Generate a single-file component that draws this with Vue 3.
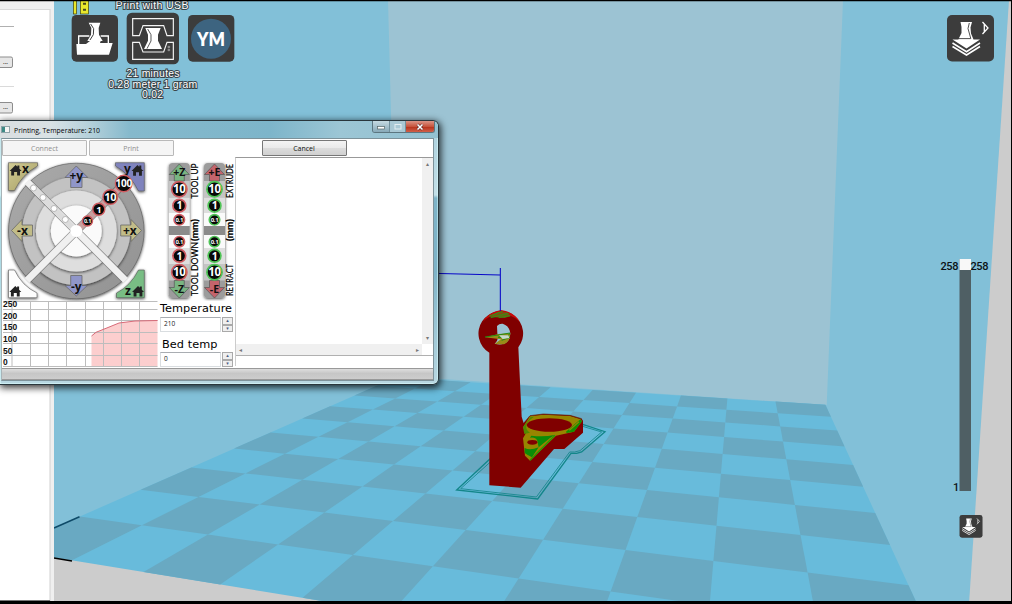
<script setup>
// Floor lattice: [column, row, x, y] anchors for the perspective fit
const anchors = [
  [0, 0, 826.7, 405], [3, 0, 680, 396], [6, 0, 550, 387], [0, 4, 852.3, 465],
  [3, 4, 661.7, 449], [0, 8, 908.3, 584.3], [3, 9, 611.7, 591], [6, 10, 304, 597.7],
  [9, 10, 71.7, 560.7], [10, 9, 80, 516.7], [10, 5, 269.3, 432.7], [10, 2, 356.7, 395],
  [7, 5, 419.3, 446], [6, 8, 393.3, 521.3], [8, 8, 259, 504.7], [2, 7, 716.7, 525.7],
]

function solve(m, v) {
  const n = v.length
  const a = m.map((r, i) => [...r, v[i]])
  for (let c = 0; c < n; c++) {
    let p = c
    for (let r = c + 1; r < n; r++) if (Math.abs(a[r][c]) > Math.abs(a[p][c])) p = r
    ;[a[c], a[p]] = [a[p], a[c]]
    for (let r = 0; r < n; r++) {
      if (r === c) continue
      const f = a[r][c] / a[c][c]
      for (let k = c; k <= n; k++) a[r][k] -= f * a[c][k]
    }
  }
  return a.map((r, i) => r[n] / r[i])
}

function fit() {
  const N = Array.from({ length: 8 }, () => Array(8).fill(0))
  const v = Array(8).fill(0)
  for (const [u0, w0, x0, y0] of anchors) {
    const u = u0 / 10, w = w0 / 10, x = x0 / 1000, y = y0 / 1000
    const rows = [[[u, w, 1, 0, 0, 0, -u * x, -w * x], x], [[0, 0, 0, u, w, 1, -u * y, -w * y], y]]
    for (const [r, t] of rows) {
      for (let i = 0; i < 8; i++) {
        v[i] += r[i] * t
        for (let j = 0; j < 8; j++) N[i][j] += r[i] * r[j]
      }
    }
  }
  return solve(N, v)
}
const h = fit()
function at(a, b) {
  const u = a / 10, w = b / 10
  const d = h[6] * u + h[7] * w + 1
  return [(h[0] * u + h[1] * w + h[2]) / d * 1000, (h[3] * u + h[4] * w + h[5]) / d * 1000]
}
const quad = (a, b, c, d) => [at(a, b), at(c, b), at(c, d), at(a, d)].map(p => p.map(n => n.toFixed(1)).join(',')).join(' ')
const floor = quad(0, 0, 10, 10)
const tiles = []
for (let i = 0; i < 10; i++) for (let j = 0; j < 10; j++) if ((i + j) % 2 === 0) tiles.push(quad(i, j, i + 1, j + 1))

const columns = [
  { x: 179.3, up: '+Z', down: '-Z', fill: '#79b582', ring: '#cf5c62' },
  { x: 214.5, up: '+E', down: '-E', fill: '#c4646c', ring: '#4fc456' },
]
const stops = [
  { y: 189.3, r: 7.6, t: '10', s: 11.5 }, { y: 205.7, r: 6.4, t: '1', s: 10.5 }, { y: 219.8, r: 5.2, t: '0.1', s: 6 },
  { y: 241.7, r: 5.2, t: '0.1', s: 6 }, { y: 255.8, r: 6.4, t: '1', s: 10.5 }, { y: 272.2, r: 7.6, t: '10', s: 11.5 },
]
const sideLabels = [
  { x: 197.5, y: 198.5, t: 'TOOL UP', l: 35 }, { x: 197.5, y: 296, t: 'TOOL DOWN', l: 54 },
  { x: 232.5, y: 198, t: 'EXTRUDE', l: 34 }, { x: 232.5, y: 296, t: 'RETRACT', l: 32 },
]
const steps = [
  { x: 87.5, y: 221, r: 5, t: '0.1', s: 5.5 }, { x: 98.8, y: 209.3, r: 6, t: '1', s: 9.5 },
  { x: 110.3, y: 197, r: 7.3, t: '10', s: 11 }, { x: 123.7, y: 183.5, r: 8.3, t: '100', s: 10 },
]
const scale = [['250', 307.4], ['200', 318.5], ['150', 330.3], ['100', 341.8], ['50', 353.5], ['0', 365]]
const gx = [12, 30.5, 48.5, 66.5, 85.5, 103.5, 121.5, 139.5]
const gy = [301.5, 309.5, 320.5, 332.5, 343.5, 355.5, 366.5]
const home = 'M-6 .5L0-5.5L1.8-3.7V-5H3.8V-1.7L6 .5H4.4V5.2H1.5V1.6H-1.5V5.2H-4.4V.5Z'
</script>

<template>
  <div class="screen">
    <svg class="scene" width="1012" height="604" viewBox="0 0 1012 604">
      <rect width="1012" height="604" fill="#cccccc" />
      <polygon points="54,0 1009,0 969,604 915,604 400,604 54,540" fill="#82c0d8" />
      <polygon points="54,558 72,561 305,598 330,604 54,604" fill="#cccccc" />
      <polygon points="388,0 843,0 826.7,405 398,376" fill="#9cc3d3" />
      <polygon :points="floor" fill="#68bbdb" />
      <polygon v-for="t in tiles" :key="t" :points="t" fill="#69a9c2" />
      <path d="M54 528L79.5 516.7" stroke="#0e4a68" stroke-width="1.5" />
      <path d="M54 558L72 561" stroke="#000" stroke-width="1.7" />
      <rect width="50" height="604" fill="#fff" />
      <rect x="50" width="4" height="604" fill="#efefef" />
      <rect x="49.5" y="9" width="1" height="592" fill="#d2d2d2" />
      <rect y="1" width="54" height="8" fill="#f0f0f0" />
      <path d="M0 9.5H50M0 86.5H14" stroke="#dadada" />
      <path d="M0 26.5H14" stroke="#b0b0b0" />
      <path d="M0 600.5H50" stroke="#777" />
      <g v-for="y in [57, 102.5]" :key="y">
        <rect x="-4" :y="y" width="16.5" height="10.5" rx="1.5" fill="#e6e6e6" stroke="#8d8d8d" />
        <text x="3" :y="y + 6.8" class="dots">...</text>
      </g>
      <g transform="translate(430 250) scale(.33333)">
        <path d="M190 617L80 720L323 747L423 610H440L455 606L525 545L458 523" fill="none" stroke="#13868a" stroke-width="4" />
        <path d="M190 628L92 716L319 741L419 606H434L450 602L515 546L458 529" fill="none" stroke="#13868a" stroke-width="2.5" />
        <path fill-rule="evenodd" d="M178 308A67 67 0 1 1 265 292L275 500L281 520L300 497L340 492L420 496L455 506L459 512V548L403 597H372L272 713L178 706ZM201 228Q208 220 218 221Q238 227 241 250Q241 275 222 281Q210 286 194 281Q207 272 202 250Z" fill="#800000" />
        <path d="M194 282Q204 274 213 268L165 262L205 252L241 250Q240 275 222 283Z" fill="#998b18" />
        <path d="M165 261L205 255L240 249L236 256L204 262L240 262L215 271" fill="none" stroke="#228b12" stroke-width="3" />
        <path d="M207 256H235L238 264L218 267Z" fill="#c8d8cb" />
        <path d="M158 216Q175 186 213 180Q252 185 270 216Q245 193 213 188Q180 193 158 216Z" fill="#c80808" />
        <path d="M178 200L205 185L230 187L243 198L224 204Z" fill="#7c5014" />
        <path d="M178 198L218 184M182 203L236 190M206 203L240 197" stroke="#2a9a10" stroke-width="3" />
        <path d="M279 532L300 499L340 494L420 498L452 508L456 514L432 545L378 557L300 632L285 617L279 565L288 549Z" fill="#978500" />
        <path d="M283 552L279 532L302 501L312 500Q290 515 289 527Q287 540 300 548Z" fill="#4f8a00" />
        <path d="M304 557Q340 562 374 555L360 564L326 592L322 572Q316 560 300 563Z" fill="#0b8c07" />
        <path d="M284 594Q300 602 326 592L306 622Q294 616 284 609Z" fill="#0b8c07" />
        <path d="M375 556L300 631" fill="none" stroke="#2a9600" stroke-width="4" />
        <path d="M408 545L451 508L456 514L432 545L410 549Z" fill="#129000" />
        <path d="M418 541L447 515" stroke="#8a8800" stroke-width="4" />
        <ellipse cx="358" cy="525" rx="68" ry="20" fill="#800000" />
        <ellipse cx="307" cy="577" rx="15" ry="7" fill="#800000" />
        <path d="M281 520L300 497L340 492L420 496L455 506" fill="none" stroke="#612400" stroke-width="2" />
        <path d="M0 70L211 75M211 54V183" fill="none" stroke="#0808c8" stroke-width="3.2" />
      </g>
      <!-- toolbar -->
      <g transform="scale(.33333)">
        <g fill="#e8e82c" stroke="#38380c" stroke-width="2">
          <rect x="220" y="0" width="10" height="42" /><rect x="241" y="0" width="25" height="42" />
        </g>
        <path d="M249 8H258V14H249ZM249 26H258V32H249Z" fill="#48481c" />
        <g fill="#3c3c3c">
          <rect x="215" y="45" width="139" height="140" rx="14" />
          <rect x="380" y="38" width="157" height="155" rx="16" />
          <rect x="564" y="45" width="139" height="140" rx="14" />
        </g>
        <path d="M236 132V108H268M302 108H325V130" fill="none" stroke="#fff" stroke-width="4" />
        <path d="M229 132H258L270 123H262L273 104L274 84L266 68H301L296 84L297 104L308 123H302L300 129H338L327 164H231Z" fill="#fff" />
        <path d="M272 72L281 86L280 104L270 120" fill="none" stroke="#3c3c3c" stroke-width="3" />
        <path d="M398 107V56H520V107H501L491 77H429L418 107ZM398 127V178H520V127H501L491 156H429L418 127Z" fill="none" stroke="#f4f4f4" stroke-width="3.5" />
        <path d="M436 84H482L474 104V122L486 147H432L444 122V104Z" fill="#fff" />
        <path d="M443 87L453 104V123L441 146" fill="none" stroke="#3c3c3c" stroke-width="2.6" />
        <path d="M504 139H509V143H504ZM504 148H509V152H504Z" fill="none" stroke="#ddd" stroke-width="1.5" />
        <circle cx="633" cy="116" r="60" fill="#3d6480" />
      </g>
      <text x="211" y="46" class="ym" textLength="28" lengthAdjust="spacingAndGlyphs">YM</text>
      <g class="outlined">
        <text x="152" y="9.3" textLength="73">Print with USB</text>
        <text x="153" y="76.5" textLength="53">21 minutes</text>
        <text x="152.7" y="87.5" textLength="89">0.28 meter 1 gram</text>
        <text x="152.5" y="98.3" textLength="21">0.02</text>
      </g>
      <g v-for="(t, i) in ['translate(947 15)', 'translate(959.5 515) scale(.49)']" :key="i" :transform="t">
        <rect width="47" height="46.5" rx="5" fill="#3c3c3c" />
        <path d="M13.5 7H25L23.5 12.5L24 18.5L26.5 24.5H33L19.5 33.5L5.5 24.5H11.3L14.5 18V12Z" fill="#fff" />
        <path d="M22.3 8L21 13.5L23.8 23.6H7.5" fill="none" stroke="#3c3c3c" stroke-width=".9" />
        <path d="M5.5 28L19.5 36.7L33 28M5.5 31.5L19.5 40L33 31.5" fill="none" stroke="#fff" stroke-width="1.6" />
        <path d="M35.5 7L41 13L35.5 19M37.3 9.5V16.5" fill="none" stroke="#fff" stroke-width="1.3" />
      </g>
      <rect x="959.5" y="259" width="11.5" height="232" fill="#4f5f64" />
      <rect x="959.5" y="259" width="11.5" height="11" fill="#f8f8f8" />
      <g class="layers">
        <text x="940.5" y="270" textLength="18">258</text>
        <text x="970.5" y="270" textLength="18">258</text>
        <text x="953" y="491">1</text>
      </g>
      <path d="M0 .5H1012" stroke="#000" stroke-width="1.4" />
      <path d="M1011.5 0V604" stroke="#000" />
      <rect y="601" width="1012" height="3" fill="#000" />
    </svg>

    <section class="dialog">
      <header class="title">
        <span class="app-icon"></span>
        <svg class="caption" width="90" height="14"><text x="1" y="10" textLength="86" lengthAdjust="spacingAndGlyphs">Printing, Temperature: 210</text></svg>
        <div class="controls">
          <span class="ctl"><svg width="10" height="8"><rect x="1.5" y="3.5" width="7" height="2.5" fill="#fff" stroke="#566" stroke-width=".7" /></svg></span>
          <span class="ctl dim"><svg width="10" height="8"><rect x="2" y="1.5" width="6" height="4.5" fill="none" stroke="#e4eef2" /></svg></span>
          <span class="ctl close"><svg width="10" height="8"><path d="M2.5 1.5L7.5 6.5M7.5 1.5L2.5 6.5" stroke="#5a2222" stroke-width="2.6" /><path d="M2.5 1.5L7.5 6.5M7.5 1.5L2.5 6.5" stroke="#fff" stroke-width="1.6" /></svg></span>
        </div>
      </header>
      <div class="client">
        <div class="buttons">
          <button disabled>Connect</button><button disabled>Print</button><i></i><button>Cancel</button><i></i>
        </div>
        <div class="body">
          <div class="left">
            <svg class="pad" width="233" height="144" viewBox="2 157 233 144">
              <defs>
                <filter id="soft" x="-20%" y="-20%" width="140%" height="140%"><feDropShadow dx="0" dy="1" stdDeviation="1.6" flood-opacity=".7" /></filter>
                <linearGradient id="tan" x1="0" y1="0" x2="1" y2="1"><stop offset="0" stop-color="#d2cc94" /><stop offset="1" stop-color="#a39b62" /></linearGradient>
                <linearGradient id="ringFill" x1="0" y1="0" x2="1" y2="1"><stop offset="0" stop-color="#aaa" /><stop offset="1" stop-color="#929292" /></linearGradient>
              </defs>
              <g stroke="#555" stroke-width=".6" filter="url(#soft)">
                <path d="M8.5 162.7H37.5V166Q22 174.5 14.5 190.5H8.5Z" fill="url(#tan)" />
                <path d="M144.3 162.7H115.5V166Q130.5 174.5 138.5 191H144.3Z" fill="#7f83bd" />
                <path d="M8.5 297.7H37V293Q22 286 14.5 270H8.5Z" fill="#fdfdfd" />
                <path d="M144.3 297.7H116.5V293Q130.5 286 138.5 270H144.3Z" fill="#78bd84" />
                <circle cx="76.3" cy="231" r="67.8" fill="url(#ringFill)" />
              </g>
              <circle cx="76.3" cy="231" r="54" fill="#c2c2c2" filter="url(#soft)" />
              <circle cx="76.3" cy="231" r="40.5" fill="#dedede" filter="url(#soft)" />
              <circle cx="76.3" cy="231" r="25.5" fill="#fafafa" filter="url(#soft)" />
              <path d="M28 182.7L124.6 279.3M124.6 182.7L28 279.3" stroke="#666" stroke-width="8.4" opacity=".65" />
              <path d="M27 181.7L125.6 280.3M76.3 231L27 280.3" stroke="#f0f0f0" stroke-width="6.8" />
              <path d="M31 185.5L72 227" stroke="#dcdcdc" stroke-width="6" />
              <path d="M76.3 231L125 182.5" stroke="#c8a0a0" stroke-width="6.5" />
              <circle cx="76.3" cy="231" r="6" fill="#fff" />
              <g fill="#fff" stroke="#a0a0a0" stroke-width=".7">
                <circle cx="33.5" cy="188" r="3" /><circle cx="43" cy="197.5" r="3" /><circle cx="54" cy="208.5" r="3" /><circle cx="65.3" cy="219.5" r="3" />
              </g>
              <g stroke="#686868" stroke-width=".8">
                <path d="M76.3 166L87.8 177.5H82V187.5H70.7V177.5H65Z" fill="#9096c9" />
                <path d="M76.3 296L87.3 285.5H82V275.5H70.7V285.5H65Z" fill="#9096c9" />
                <path d="M11.5 230.5L22 219.5V225H32.5V236H22V241.5Z" fill="#c1bc88" />
                <path d="M141.5 230.5L131 219.5V225H120.7V236H131V241.5Z" fill="#c1bc88" />
              </g>
              <g class="axis">
                <text x="76.3" y="179.5">+y</text><text x="76.3" y="290.5">-y</text>
                <text x="22.5" y="234.5">-x</text><text x="129.8" y="234.5">+x</text>
                <text x="25.5" y="172.5">x</text><text x="127.5" y="173">y</text><text x="128" y="294.5">z</text>
              </g>
              <path v-for="p in ['15.6 170.4', '137.5 170.6', '15.3 291.4', '138 291.4']" :key="p" :transform="`translate(${p})`" :d="home" fill="#222" />
              <g v-for="s in steps" :key="s.t">
                <circle :cx="s.x" :cy="s.y" :r="s.r" fill="#080808" stroke="#d15b60" stroke-width="1.4" />
                <text class="num" :x="s.x" :y="s.y + s.s * 0.36" :font-size="s.s">{{ s.t }}</text>
              </g>
              <g v-for="c in columns" :key="c.up">
                <rect :x="c.x - 10.5" y="163" width="21" height="135" rx="4" fill="#9c9c9c" filter="url(#soft)" />
                <rect :x="c.x - 10.5" y="181" width="21" height="16.5" fill="#c4c4c4" />
                <rect :x="c.x - 10.5" y="197.5" width="21" height="15.5" fill="#dedede" />
                <rect :x="c.x - 10.5" y="213" width="21" height="35" fill="#fafafa" />
                <rect :x="c.x - 10.5" y="226" width="21" height="9" fill="#8b8b8b" />
                <rect :x="c.x - 10.5" y="248" width="21" height="16" fill="#dedede" />
                <rect :x="c.x - 10.5" y="264" width="21" height="16.5" fill="#c4c4c4" />
                <g :transform="`translate(${c.x} 0)`" stroke="#555" stroke-width=".7" :fill="c.fill">
                  <path d="M0 164L10 174.5H5V181H-5V174.5H-10Z" />
                  <path d="M0 298L10 287.5H5V280.5H-5V287.5H-10Z" />
                </g>
                <g class="axis small"><text :x="c.x" y="175.5">{{ c.up }}</text><text :x="c.x" y="292.5">{{ c.down }}</text></g>
                <g v-for="s in stops" :key="s.y">
                  <circle :cx="c.x" :cy="s.y" :r="s.r" fill="#080808" :stroke="c.ring" stroke-width="1.7" />
                  <text class="num" :x="c.x" :y="s.y + s.s * 0.36" :font-size="s.s">{{ s.t }}</text>
                </g>
              </g>
              <text v-for="l in sideLabels" :key="l.t" class="side" :transform="`translate(${l.x} ${l.y}) rotate(-90)`" :textLength="l.l" lengthAdjust="spacingAndGlyphs">{{ l.t }}</text>
              <text v-for="x in [197.5, 232.5]" :key="x" class="side bold" :transform="`translate(${x} 241) rotate(-90)`" textLength="22" lengthAdjust="spacingAndGlyphs">(mm)</text>
            </svg>
            <div class="lower">
              <svg class="graph" width="156" height="67" viewBox="2 301 156 67">
                <path d="M91.5 336L96 332.3L108 327.5L119 323L135 321L157.5 320.5V366.5H91.5Z" fill="#fccece" />
                <g stroke="#bdbdbd"><path v-for="x in gx" :key="x" :d="`M${x} 301V367`" /><path v-for="y in gy" :key="y" :d="`M3 ${y}H157.5`" /></g>
                <path d="M91.5 336L96 332.3L108 327.5L119 323L135 321L157.5 320.5" fill="none" stroke="#d86a78" />
                <text v-for="[t, y] in scale" :key="t" class="scale" x="3" :y="y" :textLength="t.length * 4.7" lengthAdjust="spacingAndGlyphs">{{ t }}</text>
              </svg>
              <div class="temps">
                <label>Temperature</label>
                <div class="spin"><span>210</span><div class="arrows"><i>▴</i><i>▾</i></div></div>
                <label class="bed">Bed temp</label>
                <div class="spin"><span>0</span><div class="arrows"><i>▴</i><i>▾</i></div></div>
              </div>
            </div>
          </div>
          <div class="right">
            <div class="log">
              <div class="paper"></div>
              <div class="vbar"><i>▴</i><i>▾</i></div>
              <div class="hbar"><i>◂</i><i>▸</i></div>
            </div>
            <div class="entry"></div>
          </div>
        </div>
        <div class="status"></div>
      </div>
    </section>
  </div>
</template>

<style>
html, body { overflow: hidden; }
</style>

<style scoped>
.screen { position: relative; width: 1012px; height: 604px; overflow: hidden; font-family: "Open Sans", "Noto Sans", sans-serif; }
.scene { display: block; }
.dots { font: bold 6px "Liberation Sans", sans-serif; fill: #333; }
.ym { font: 800 19px Lato, sans-serif; fill: #fff; text-anchor: middle; }
.outlined text { font: 10.5px "Liberation Sans", sans-serif; fill: #fff; stroke: #3a454a; stroke-width: 2px; paint-order: stroke; text-anchor: middle; }
.layers text { font: 500 11px Roboto, sans-serif; fill: #0c1216; }
.dialog {
  position: absolute; left: 0; top: 120px; width: 439px; height: 265px; box-sizing: border-box;
  display: flex; flex-direction: column; padding: 0 4px 3px 1px; border: 1px solid #29363c; border-left: 0; border-radius: 0 6px 6px 0;
  background: linear-gradient(180deg, #a9cfdd 0, #c4e0e8 74px, #7fb4c8 77px, #7fb4c8 150px, #b9d8e2 100%);
  box-shadow: 0 0 0 .5px #dff inset, 1px 2px 7px 1px rgba(0, 0, 0, .75);
}
.title {
  height: 17px; flex: none; display: flex; align-items: center; margin: 0 -4px 0 -1px; padding-left: 1px; border-radius: 0 6px 0 0;
  background: linear-gradient(90deg, #d9dee0 0, #d9e2e5 50px, #b4d0da 90px, #85b9cc 130px, #7db5ca 270px, #9cc6d5 340px, #93c1d1 100%);
}
.app-icon { width: 9px; height: 7px; margin-right: 3px; background: linear-gradient(90deg, #3d8b86 45%, #f5f5f5 45%); border: 1px solid #8fa3a8; box-sizing: border-box; }
.caption { overflow: visible; }
.caption text { font: 8px "Open Sans", sans-serif; fill: #000; }
.controls { display: flex; margin-left: auto; margin-right: 3px; height: 11px; align-self: flex-start; border: 1px solid #5c7680; border-top: 0; border-radius: 0 0 3px 3px; overflow: hidden; }
.ctl { width: 16px; display: flex; align-items: center; justify-content: center; background: linear-gradient(#c5dae2, #87a9b8); border-right: 1px solid #71909c; }
.dim { background: #a9c8d4; width: 15px; }
.close { width: 28px; border: 0; background: linear-gradient(#dc9486 0, #c7543d 50%, #b53019 52%, #d0604a 100%); }
.client { flex: 1; display: flex; flex-direction: column; background: #fff; border: 1px solid #7d929a; border-left-color: #a8b4b8; min-height: 0; }
.buttons { display: grid; grid-template-columns: repeat(5, 1fr); gap: 1.5px; height: 18px; flex: none; align-items: center; }
.buttons button { height: 16px; padding: 0; border: 1px solid #777; border-radius: 1px; background: linear-gradient(#f4f4f4, #eaeaea 48%, #dcdcdc 52%, #d0d0d0); font: 7px/13px "Open Sans", sans-serif; color: #111; }
.buttons button:disabled { border-color: #b9b9b9; background: #f5f5f5; color: #909090; }
.body { flex: 1; display: flex; min-height: 0; }
.left { width: 233px; flex: none; display: flex; flex-direction: column; }
.pad { display: block; flex: none; }
.graph { overflow: visible; flex: none; }
.lower { display: flex; }
.axis text { font: bold 12px "Open Sans", sans-serif; text-anchor: middle; fill: #111; }
.axis.small text { font-size: 10.5px; }
.num { font-family: "Open Sans", sans-serif; font-weight: 700; fill: #fff; text-anchor: middle; letter-spacing: -.3px; }
.side { font: 9.5px Lato, sans-serif; fill: #000; stroke: #000; stroke-width: .2px; }
.side.bold { font-weight: 700; }
.scale { font: bold 8.5px "Liberation Sans", sans-serif; fill: #111; }
.temps { flex: 1; padding: 0 2px; display: flex; flex-direction: column; }
.temps label { font: 11.3px/15px "DejaVu Sans", sans-serif; height: 16px; white-space: nowrap; letter-spacing: .05px; }
.temps .bed { margin-top: 5px; padding-left: 2px; height: 15px; }
.spin { height: 15px; display: flex; gap: 1px; }
.spin > span { flex: 1; border: 1px solid #d9dde0; border-top-color: #a9adb2; font: 6.5px/12px "Open Sans", sans-serif; padding-left: 3px; box-sizing: border-box; color: #222; }
.arrows { width: 11px; display: flex; flex-direction: column; }
.arrows i { flex: 1; border: 1px solid #a9a9a9; background: #efefef; font: normal 5px/5px "DejaVu Sans", sans-serif; text-align: center; color: #4b5c83; overflow: hidden; }
.right { flex: 1; display: flex; flex-direction: column; border-top: 1px solid #999; border-left: 1px solid #ccc; box-sizing: border-box; }
.log { height: 197px; display: grid; grid-template: 1fr 11px / 1fr 11px; border-bottom: 1px solid #b0b0b0; }
.vbar, .hbar { display: flex; justify-content: space-between; align-items: center; background: #f0f0f0; color: #777; padding: 3px 0; }
.vbar { flex-direction: column; }
.hbar { padding: 0 3px; }
.vbar i, .hbar i { font: normal 6px/6px "DejaVu Sans", sans-serif; }
.entry { flex: 1; background: #fff; }
.status { height: 10px; flex: none; margin: 2px 0 0; border: 1px solid #999; border-width: 1px 0; background: linear-gradient(#dedede, #c6c6c6 45%, #cdcdcd); }
</style>
